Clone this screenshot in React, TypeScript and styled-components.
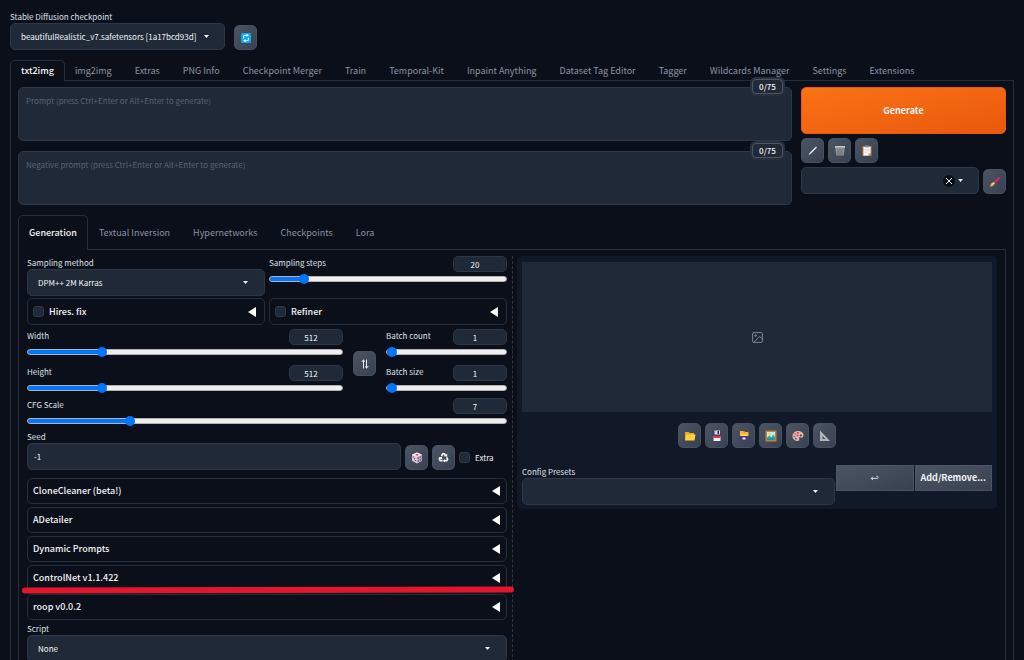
import React, { useState } from "react";
import styled, { createGlobalStyle, css } from "styled-components";

const c = {
  page: "#0b0f19",
  panel: "#111827",
  field: "#1f2937",
  line: "#272e3b",
  fieldLine: "#2d3746",
  text: "#f3f4f6",
  label: "#dfe2e7",
  muted: "#8b93a1",
  placeholder: "#5a6474",
  blue: "#0075ff",
};

const Global = createGlobalStyle`
  *, *::before, *::after { box-sizing: border-box; }
  html { background: ${c.page}; scrollbar-width: none; }
  body {
    margin: 0;
    background: ${c.page};
    color: ${c.text};
    font-family: "Noto Sans CJK JP", "Open Sans", sans-serif;
    font-size: 9px;
    line-height: 12px;
  }
  button, input, textarea, select { font: inherit; color: inherit; margin: 0; }
`;

const Page = styled.div`
  position: relative;
  padding: 10px 10px 12px;
`;

const Label = styled.label`
  display: block;
  color: ${c.label};
  font-size: 8px;
  line-height: 13px;
  white-space: nowrap;
`;

const fieldBox = css`
  background: ${c.field};
  border: 1px solid ${c.fieldLine};
  border-radius: 5px;
`;

const SelectWrap = styled.div<{ $inset?: number }>`
  display: grid;
  align-items: center;
  flex: 1;
  min-width: 0;
  > * { grid-area: 1 / 1; }
  > svg { justify-self: end; margin-right: ${(p) => p.$inset ?? 17}px; pointer-events: none; }
`;

const SelectBox = styled.select`
  ${fieldBox}
  appearance: none;
  width: 100%;
  height: 27px;
  padding: 0 10px;
  font-size: 8px;
  outline: none;
`;

const Caret = () => (
  <svg width="5" height="3" viewBox="0 0 5 3" aria-hidden="true">
    <path d="M0 0h5L2.5 3z" fill="#f3f4f6" />
  </svg>
);

function Dropdown({ id, value, inset, label, children }: {
  id: string; value: string; inset?: number; label?: string; children?: React.ReactNode;
}) {
  return (
    <SelectWrap $inset={inset}>
      <SelectBox id={id} aria-label={label} defaultValue={value}>
        <option value={value}>{value}</option>
      </SelectBox>
      {children}
      <Caret />
    </SelectWrap>
  );
}

const ToolButton = styled.button`
  display: flex;
  flex: none;
  align-items: center;
  justify-content: center;
  width: 23px;
  height: 25px;
  padding: 0;
  border: 1px solid #465060;
  border-radius: 5px;
  background: linear-gradient(to bottom right, #4b5563, #374151);
  cursor: pointer;
`;

const CheckpointArea = styled.header`
  width: 247px;
`;

const CheckpointRow = styled.div`
  display: flex;
  align-items: flex-end;
  gap: 9px;
`;

const TabBar = styled.nav<{ $gap: number }>`
  display: flex;
  position: relative;
  margin-top: 10px;
  margin-bottom: -1px;
  > button:nth-child(n + 3) { margin-left: ${(p) => p.$gap}px; }
`;

const Tab = styled.button<{ $active?: boolean; $tall?: boolean }>`
  height: ${(p) => (p.$tall ? 35 : 21)}px;
  padding: 0 ${(p) => (p.$tall && !p.$active ? 11 : 10)}px;
  border: 1px solid ${(p) => (p.$active ? c.line : "transparent")};
  border-width: ${(p) => (p.$active ? "1px 1px 0" : "1px 0 0")};
  border-radius: 5px 5px 0 0;
  background: ${(p) => (p.$active ? c.page : "transparent")};
  color: ${(p) => (p.$active ? c.text : c.muted)};
  font-size: 9px;
  font-weight: ${(p) => (p.$active ? 500 : 400)};
  line-height: 12px;
  white-space: nowrap;
  cursor: pointer;
`;

const TabPanel = styled.section<{ $inner?: boolean }>`
  padding: 6px ${(p) => (p.$inner ? 8 : 7)}px 7px;
  border: 1px solid ${c.line};
`;

const TopRow = styled.div`
  display: grid;
  grid-template-columns: minmax(0, 1fr) 205px;
  gap: 9px;
`;

const Prompts = styled.div`
  display: flex;
  flex-direction: column;
  gap: 10px;
`;

const PromptBox = styled.div`
  display: flex;
  position: relative;
`;

const PromptInput = styled.textarea`
  ${fieldBox}
  width: 100%;
  height: 54px;
  padding: 7px;
  font-size: 8px;
  line-height: 12px;
  resize: none;
  outline: none;
  &::placeholder { color: ${c.placeholder}; opacity: 1; }
`;

const Counter = styled.span`
  position: absolute;
  top: -8px;
  right: 9px;
  width: 31px;
  height: 15px;
  border: 1px solid #4b5563;
  border-radius: 4px;
  box-shadow: 0 0 0 2px #2b313c;
  background: ${c.field};
  font-size: 8px;
  font-weight: 500;
  line-height: 13px;
  text-align: center;
`;

const Actions = styled.div`
  display: flex;
  flex-direction: column;
`;

const Generate = styled.button`
  height: 47px;
  border: 1px solid #ea580c;
  border-radius: 5px;
  background: linear-gradient(to bottom right, #f97316, #ea580c);
  font-weight: 700;
  font-size: 9px;
  cursor: pointer;
`;

const ButtonRow = styled.div`
  display: flex;
  align-items: flex-end;
  gap: 4px;
  margin-top: 4px;
`;

const ClearButton = styled.button`
  justify-self: end;
  display: grid;
  place-items: center;
  width: 12px;
  height: 12px;
  margin-right: 24px;
  padding: 0;
  border: 0;
  border-radius: 50%;
  background: ${c.page};
`;

const Columns = styled.div`
  display: grid;
  grid-template-columns: minmax(0, 1fr) 10px minmax(0, 1fr);
`;

const Divider = styled.div`
  justify-self: center;
  border-left: 1px dashed #303744;
`;

const Settings = styled.div`
  display: flex;
  flex-direction: column;
`;

const Pair = styled.div`
  display: grid;
  grid-template-columns: minmax(0, 1fr) minmax(0, 1fr);
  gap: 4px;
  margin-bottom: 2px;
`;

const SliderField = styled.div<{ $h?: number }>`
  display: grid;
  grid-template-columns: 1fr 54px;
  grid-template-rows: 16px 14px;
  height: ${(p) => p.$h ?? 36}px;
  align-content: start;
`;

const NumberInput = styled.input`
  ${fieldBox}
  appearance: textfield;
  width: 54px;
  height: 16px;
  padding: 0 10px 0 0;
  font-size: 8px;
  text-align: center;
  outline: none;
  &::-webkit-inner-spin-button { display: none; }
`;

const Range = styled.input`
  grid-column: 1 / -1;
  appearance: none;
  width: 100%;
  height: 14px;
  background: transparent;
  outline: none;
  &::-webkit-slider-runnable-track {
    height: 6px;
    border: 1px solid #b2b2b2;
    border-radius: 3px;
    background: linear-gradient(to right, ${c.blue} var(--fill), #efefef var(--fill)) border-box;
  }
  &::-webkit-slider-thumb {
    appearance: none;
    width: 10px;
    height: 10px;
    margin-top: -3px;
    border-radius: 50%;
    background: ${c.blue};
  }
`;

function Slider({ id, label, min, max, start, height }: {
  id: string; label: string; min: number; max: number; start: number; height?: number;
}) {
  const [value, setValue] = useState(start);
  const fill = `${((value - min) / (max - min)) * 96 + 2}%`;
  return (
    <SliderField $h={height}>
      <Label htmlFor={id}>{label}</Label>
      <NumberInput id={id} type="number" value={value} onChange={(e) => setValue(Number(e.target.value))} />
      <Range
        type="range" aria-label={label} min={min} max={max} value={value}
        style={{ "--fill": fill } as React.CSSProperties}
        onChange={(e) => setValue(Number(e.target.value))}
      />
    </SliderField>
  );
}

const AccordionHead = styled.button`
  display: flex;
  align-items: center;
  width: 100%;
  height: 26px;
  padding: 0 6px 0 5px;
  border: 1px solid ${c.line};
  border-radius: 5px;
  background: transparent;
  font-size: 9px;
  font-weight: 500;
  cursor: pointer;
  > svg { margin-left: auto; }
`;

const AccordionBox = styled.div`
  display: flex;
  align-items: center;
  height: 27px;
  padding: 0 8px 0 5px;
  border: 1px solid ${c.line};
  border-radius: 5px;
  > svg { margin-left: auto; }
`;

const CheckLabel = styled.label<{ $small?: boolean }>`
  display: flex;
  align-items: center;
  gap: 5px;
  font-size: ${(p) => (p.$small ? 8 : 9)}px;
  font-weight: ${(p) => (p.$small ? 400 : 500)};
`;

const Check = styled.input`
  appearance: none;
  width: 11px;
  height: 11px;
  border: 1px solid #2f3a4a;
  border-radius: 3px;
  background: ${c.field};
  &:checked { background: ${c.blue}; }
`;

const Arrow = () => (
  <svg width="8" height="10" viewBox="0 0 8 10" aria-hidden="true">
    <path d="M8 0v10L0 5z" fill="#fff" />
  </svg>
);

const SizeRow = styled.div`
  display: grid;
  grid-template-columns: minmax(0, 1fr) 23px 121px;
  gap: 10px;
  align-items: center;
  margin-top: 2px;
`;

const SeedRow = styled.div`
  display: flex;
  align-items: flex-end;
  gap: 4px;
  margin-bottom: 8px;
`;

const SeedInput = styled.input`
  ${fieldBox}
  flex: 1;
  min-width: 0;
  height: 27px;
  padding: 0 6px;
  font-size: 8px;
  outline: none;
`;

const ExtraSlot = styled.div`
  display: flex;
  align-items: center;
  width: 48px;
  height: 25px;
`;

const AccordionList = styled.div`
  display: grid;
  gap: 3px;
  margin-bottom: 2px;
`;

const Output = styled.div`
  align-self: start;
  padding: 6px 5px 4px;
  border-radius: 5px;
  background: ${c.panel};
`;

const Gallery = styled.div`
  display: grid;
  place-items: center;
  height: 150px;
  background: ${c.field};
`;

const OutputTools = styled.div`
  display: flex;
  justify-content: center;
  gap: 4px;
  margin: 11px 0 17px;
`;

const Presets = styled.div`
  display: grid;
  grid-template-columns: minmax(0, 1fr) 156px;
  gap: 1px;
  align-items: start;
`;

const PresetActions = styled.div`
  display: grid;
  grid-template-columns: 1fr 1fr;
  gap: 1px;
`;

const PresetButton = styled.button`
  display: flex;
  align-items: center;
  justify-content: center;
  height: 26px;
  padding: 0;
  border: 1px solid #4b5563;
  background: linear-gradient(to bottom right, #4b5563, #374151);
  font-size: 9px;
  font-weight: 700;
  white-space: nowrap;
  cursor: pointer;
`;

const Marker = styled.svg`
  position: absolute;
  top: 586px;
  left: 22px;
  width: calc(50% - 20px);
  height: 8px;
  pointer-events: none;
`;

const Icon = ({ size = 12, children }: { size?: number; children: React.ReactNode }) => (
  <svg width={size} height={size} viewBox="0 0 24 24" aria-hidden="true">{children}</svg>
);

const RefreshIcon = () => (
  <Icon>
    <rect x="2" y="2" width="20" height="20" rx="2" fill="#03a9f4" />
    <path d="M7 13V9.500a3 3 0 0 1 3-3h4M17 11v3.500a3 3 0 0 1-3 3h-4" fill="none" stroke="#fff" strokeWidth="2.200" />
    <path d="M13 3.500l5 3.200-5 3.500zM11 20.500l-5-3.200 5-3.500z" fill="#fff" />
  </Icon>
);
const PenIcon = () => (
  <Icon>
    <path d="M3 20l3-5L18 3l2 2L8 17z" fill="#e5e7eb" />
    <path d="M3 20l2-4 2 2z" fill="#9ca3af" />
  </Icon>
);
const TrashIcon = () => (
  <Icon>
    <path d="M2 3h20l-2.500 18h-15z" fill="#8e9298" />
    <path d="M2 2h20v3H2z" fill="#c3c6ca" />
    <path d="M6 9l12 11M10 7l9 9M5.500 14l7 7M18 9L6 20M14 7l-9 9M18.500 14l-7 7" stroke="#656a72" strokeWidth="1.200" />
  </Icon>
);
const ClipboardIcon = () => (
  <Icon>
    <rect x="3" y="2" width="18" height="20" rx="1" fill="#c77b43" />
    <path d="M5 4h14v12l-4 5H5z" fill="#fafafa" />
    <path d="M19 16h-4v5z" fill="#bdbdbd" />
    <rect x="8" y="1" width="8" height="4" rx="1" fill="#8c929b" />
    <path d="M7 9h10M7 12h10M7 15h6" stroke="#c3c6ca" strokeWidth="1.200" />
  </Icon>
);
const BrushIcon = () => (
  <Icon>
    <path d="M19 2c2 0 3 2 2 4l-9 9-3-3z" fill="#ec1c5d" />
    <path d="M9 12l3 3-3 3-4-3z" fill="#cfd8dc" />
    <path d="M6 14l4 3c-1 3-4 4-8 4 2-2 1-6 4-7z" fill="#ffb636" />
  </Icon>
);
const SwapIcon = () => (
  <Icon>
    <path d="M9 21V4M5.500 8L9 3.500M15 3v17M15 20.500l3.500-4.500" fill="none" stroke="#e5e7eb" strokeWidth="2" />
    <path d="M9 3l2.500 5M12.500 16l2.500 5" fill="none" stroke="#e5e7eb" strokeWidth="1.400" />
  </Icon>
);
const DiceIcon = () => (
  <Icon>
    <path d="M12 1l10 4.500v12L12 23 2 17.500v-12z" fill="#d9c5d8" />
    <path d="M12 1l10 4.500L12 10 2 5.500z" fill="#f5edf5" />
    <path d="M12 10l10-4.500v12L12 23z" fill="#b89db8" />
    <ellipse cx="12" cy="5.500" rx="3" ry="1.700" fill="#e53950" />
    <g fill="#75597a">
      <circle cx="5" cy="10" r="1.300" /><circle cx="9" cy="17" r="1.300" /><circle cx="7" cy="13.500" r="1.300" />
      <circle cx="15" cy="12" r="1.300" /><circle cx="19" cy="10" r="1.300" /><circle cx="15" cy="18" r="1.300" /><circle cx="19" cy="16" r="1.300" />
    </g>
  </Icon>
);
const RecycleIcon = () => (
  <Icon size={11}>
    <g fill="none" stroke="#fff" strokeWidth="3.600">
      <path d="M7.500 9l3-5h3.500l2.500 4" />
      <path d="M19 11.500l2 4-2 3.500h-5" />
      <path d="M10 19H5l-2-3.500 2-3.500" />
    </g>
    <path d="M13 9.500l7 1V4zM15.500 15v8l-5-4zM1.500 12.500l7-2 1 6.500z" fill="#fff" />
  </Icon>
);
const FolderIcon = () => (
  <Icon>
    <path d="M2 4h7l2 2h9v14H2z" fill="#f9a825" />
    <path d="M5 9h18l-2 12H2z" fill="#ffd438" />
  </Icon>
);
const FloppyIcon = () => (
  <Icon>
    <path d="M3 1h16l2 3v18H3z" fill="#4b3a68" />
    <rect x="7" y="1" width="11" height="8" fill="#d8dbe2" />
    <rect x="13" y="2" width="3" height="6" fill="#35264f" />
    <rect x="5" y="12" width="14" height="10" fill="#f4f4f6" />
    <rect x="5" y="12" width="14" height="4" fill="#e8344e" />
  </Icon>
);
const ArchiveIcon = () => (
  <Icon>
    <path d="M4 2h7l2 2h8v10H4z" fill="#ffb52e" />
    <path d="M11 2h3v3h-3z" fill="#e86a2a" />
    <path d="M5 8h14v5H5z" fill="#ffd23f" />
    <path d="M1 12h22v4l-2 1v5H3v-5l-2-1z" fill="#4c3b78" />
    <rect x="9" y="15" width="6" height="4" rx="1" fill="#f4f4f6" />
  </Icon>
);
const PictureIcon = () => (
  <Icon>
    <rect x="1" y="1" width="22" height="22" fill="#b9853f" />
    <rect x="4" y="4" width="16" height="16" fill="#bfe8fb" />
    <circle cx="9" cy="8" r="2.500" fill="#ffce31" />
    <path d="M4 15l5-4 4 4 3-6 4 5v6H4z" fill="#3aa76d" />
    <path d="M4 17h16v3H4z" fill="#1c8fbf" />
  </Icon>
);
const PaletteIcon = () => (
  <Icon>
    <path d="M12 2c6 0 11 3.500 11 8.500 0 4-3 5.500-6 4.500s-4 1-2.500 3c1 2-.5 4-3.500 4C5 22 1 17.500 1 12S6 2 12 2z" fill="#efb3a1" />
    <circle cx="17.500" cy="11" r="2.200" fill="#3d4655" />
    <circle cx="12" cy="5.500" r="2" fill="#e53950" />
    <circle cx="6.500" cy="8" r="2" fill="#ff4f9a" />
    <circle cx="5" cy="13" r="2" fill="#2fa866" />
    <circle cx="8" cy="17.500" r="2" fill="#4a6ee0" />
    <circle cx="11" cy="11" r="1.800" fill="#8a4fc9" />
  </Icon>
);
const RulerIcon = () => (
  <Icon>
    <path d="M2 1l20 21H2zM7 12v6h6z" fill="#b4b8bf" fillRule="evenodd" />
    <path d="M4 8v11M7 20h10" stroke="#8c929b" strokeWidth="1" strokeDasharray="1.500 1.500" />
  </Icon>
);
const ReturnIcon = () => (
  <Icon size={10}>
    <path d="M7 9l-4 4 4 4M3 13h15a3 3 0 0 0 0-5h-3" fill="none" stroke="#f3f4f6" strokeWidth="2" />
  </Icon>
);
const ImageIcon = () => (
  <svg width="13" height="13" viewBox="0 0 24 24" fill="none" stroke="#8a919c" strokeWidth="1.600" strokeLinecap="round" strokeLinejoin="round" aria-hidden="true">
    <rect x="3" y="3" width="18" height="18" rx="2" />
    <circle cx="8.500" cy="8.500" r="1.500" />
    <path d="M21 15l-5-5L5 21" />
  </svg>
);

const mainTabs = [
  "txt2img", "img2img", "Extras", "PNG Info", "Checkpoint Merger", "Train", "Temporal-Kit",
  "Inpaint Anything", "Dataset Tag Editor", "Tagger", "Wildcards Manager", "Settings", "Extensions",
];
const subTabs = ["Generation", "Textual Inversion", "Hypernetworks", "Checkpoints", "Lora"];
const extensions = ["CloneCleaner (beta!)", "ADetailer", "Dynamic Prompts", "ControlNet v1.1.422", "roop v0.0.2"];
const outputTools = [
  { name: "Open folder", icon: <FolderIcon /> },
  { name: "Save", icon: <FloppyIcon /> },
  { name: "Save zip", icon: <ArchiveIcon /> },
  { name: "Send to img2img", icon: <PictureIcon /> },
  { name: "Send to inpaint", icon: <PaletteIcon /> },
  { name: "Send to extras", icon: <RulerIcon /> },
];

export default function App() {
  return (
    <>
      <Global />
      <Page>
        <CheckpointArea>
          <Label htmlFor="checkpoint">Stable Diffusion checkpoint</Label>
          <CheckpointRow>
            <Dropdown id="checkpoint" value="beautifulRealistic_v7.safetensors [1a17bcd93d]" inset={16} />
            <ToolButton aria-label="Refresh"><RefreshIcon /></ToolButton>
          </CheckpointRow>
        </CheckpointArea>

        <TabBar $gap={3}>
          {mainTabs.map((t, i) => <Tab key={t} $active={i === 0}>{t}</Tab>)}
        </TabBar>
        <TabPanel>
          <TopRow>
            <Prompts>
              <PromptBox>
                <PromptInput aria-label="Prompt" placeholder="Prompt (press Ctrl+Enter or Alt+Enter to generate)" />
                <Counter>0/75</Counter>
              </PromptBox>
              <PromptBox>
                <PromptInput aria-label="Negative prompt" placeholder="Negative prompt (press Ctrl+Enter or Alt+Enter to generate)" />
                <Counter>0/75</Counter>
              </PromptBox>
            </Prompts>
            <Actions>
              <Generate>Generate</Generate>
              <ButtonRow>
                <ToolButton aria-label="Read parameters"><PenIcon /></ToolButton>
                <ToolButton aria-label="Clear prompt"><TrashIcon /></ToolButton>
                <ToolButton aria-label="Apply styles"><ClipboardIcon /></ToolButton>
              </ButtonRow>
              <ButtonRow>
                <Dropdown id="styles" label="Styles" value="" inset={16}>
                  <ClearButton aria-label="Clear styles">
                    <svg width="6" height="6" viewBox="0 0 6 6" aria-hidden="true">
                      <path d="M0 0l6 6M6 0L0 6" stroke="#f3f4f6" strokeWidth="1" />
                    </svg>
                  </ClearButton>
                </Dropdown>
                <ToolButton aria-label="Edit styles"><BrushIcon /></ToolButton>
              </ButtonRow>
            </Actions>
          </TopRow>

          <TabBar $gap={1}>
            {subTabs.map((t, i) => <Tab key={t} $tall $active={i === 0}>{t}</Tab>)}
          </TabBar>
          <TabPanel $inner>
            <Columns>
              <Settings>
                <Pair>
                  <div>
                    <Label htmlFor="sampler">Sampling method</Label>
                    <Dropdown id="sampler" value="DPM++ 2M Karras" />
                  </div>
                  <Slider id="steps" label="Sampling steps" min={1} max={150} start={20} />
                </Pair>
                <Pair>
                  <AccordionBox>
                    <CheckLabel><Check type="checkbox" />Hires. fix</CheckLabel>
                    <Arrow />
                  </AccordionBox>
                  <AccordionBox>
                    <CheckLabel><Check type="checkbox" />Refiner</CheckLabel>
                    <Arrow />
                  </AccordionBox>
                </Pair>
                <SizeRow>
                  <div>
                    <Slider id="width" label="Width" min={64} max={2048} start={512} />
                    <Slider id="height" label="Height" min={64} max={2048} start={512} height={33} />
                  </div>
                  <ToolButton aria-label="Swap width and height"><SwapIcon /></ToolButton>
                  <div>
                    <Slider id="count" label="Batch count" min={1} max={100} start={1} />
                    <Slider id="size" label="Batch size" min={1} max={8} start={1} height={33} />
                  </div>
                </SizeRow>
                <Slider id="cfg" label="CFG Scale" min={1} max={30} start={7} height={32} />
                <Label htmlFor="seed">Seed</Label>
                <SeedRow>
                  <SeedInput id="seed" type="text" defaultValue="-1" />
                  <ToolButton aria-label="Random seed"><DiceIcon /></ToolButton>
                  <ToolButton aria-label="Reuse seed"><RecycleIcon /></ToolButton>
                  <ExtraSlot>
                    <CheckLabel $small><Check type="checkbox" />Extra</CheckLabel>
                  </ExtraSlot>
                </SeedRow>
                <AccordionList>
                  {extensions.map((name) => (
                    <AccordionHead key={name}>{name}<Arrow /></AccordionHead>
                  ))}
                </AccordionList>
                <Label htmlFor="script">Script</Label>
                <Dropdown id="script" value="None" />
              </Settings>
              <Divider />
              <Output>
                <Gallery><ImageIcon /></Gallery>
                <OutputTools>
                  {outputTools.map((t) => (
                    <ToolButton key={t.name} aria-label={t.name}>{t.icon}</ToolButton>
                  ))}
                </OutputTools>
                <Presets>
                  <div>
                    <Label htmlFor="presets">Config Presets</Label>
                    <Dropdown id="presets" value="" />
                  </div>
                  <PresetActions>
                    <PresetButton aria-label="Reset preset"><ReturnIcon /></PresetButton>
                    <PresetButton>Add/Remove...</PresetButton>
                  </PresetActions>
                </Presets>
              </Output>
            </Columns>
          </TabPanel>
        </TabPanel>
        <Marker viewBox="0 0 492 8" preserveAspectRatio="none" aria-hidden="true">
          <path d="M3 4.500L489 3.500" stroke="#e3172c" strokeWidth="6" strokeLinecap="round" />
        </Marker>
      </Page>
    </>
  );
}
